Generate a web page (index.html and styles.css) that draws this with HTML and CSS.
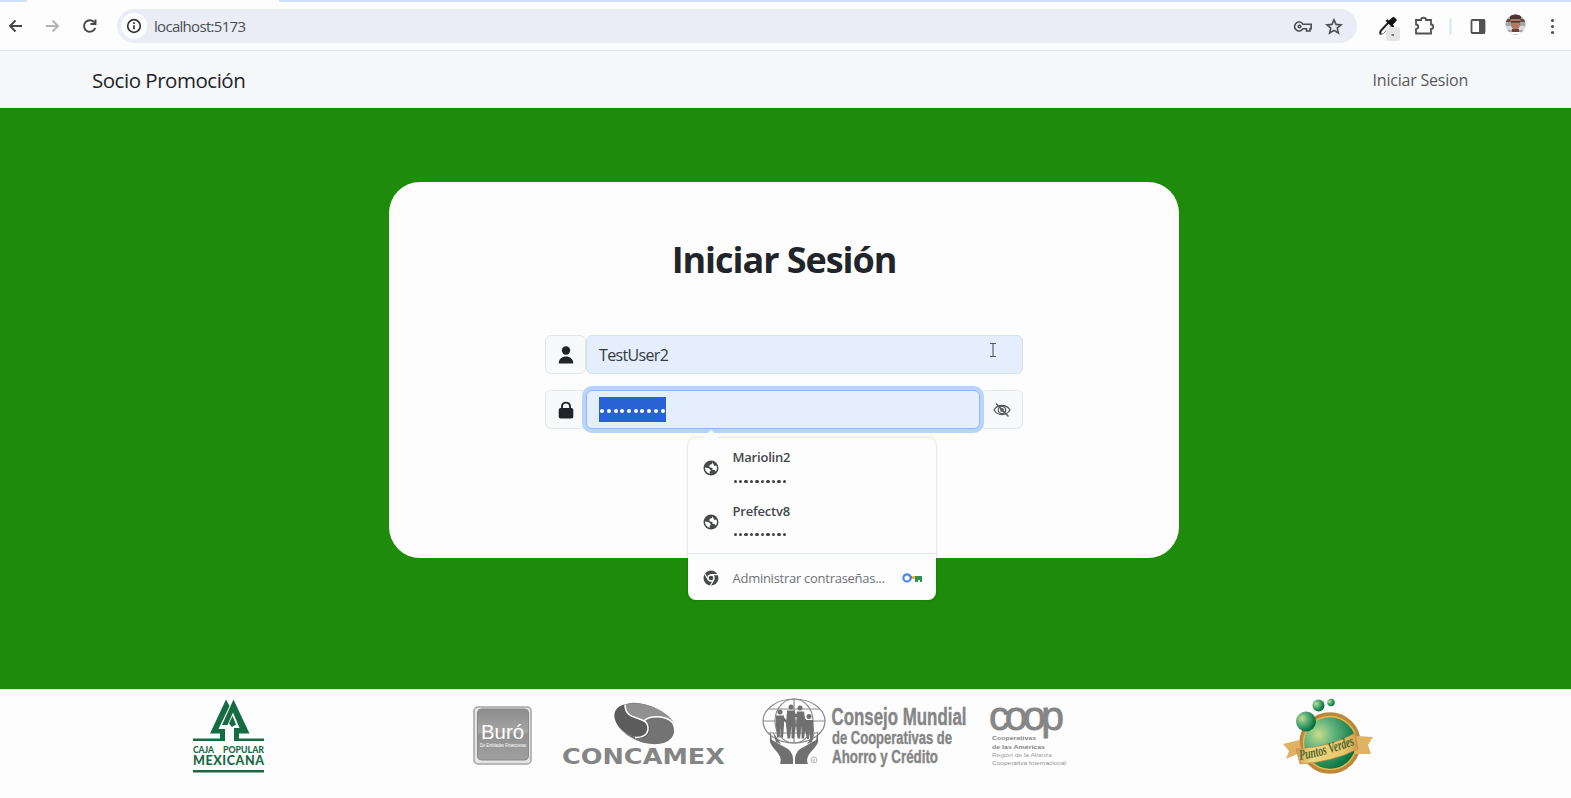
FILE: index.html
```
<!DOCTYPE html>
<html lang="es">
<head>
<meta charset="utf-8">
<title>Socio Promoción</title>
<link rel="stylesheet" href="styles.css">
</head>
<body>
<div class="tabstrip"><div class="tab"></div></div>
<header class="toolbar">
  <svg class="nav-icons" width="110" height="30" viewBox="0 0 110 30" fill="none" stroke="#45474a" stroke-width="1.9">
    <path d="M22 15H10.500M15.500 9.500 10 15l5.500 5.500"/>
    <path stroke="#b2b3b6" d="M46 15h11.500M52.500 9.500 58 15l-5.500 5.500"/>
    <path d="M94.500 11.500A5.800 5.800 0 1 0 95.300 17M95.500 8.500v4.500H90.500"/>
  </svg>
  <div class="omnibox">
    <span class="info"><svg width="16" height="16" viewBox="0 0 16 16" fill="none" stroke="#333538" stroke-width="1.7"><circle cx="8" cy="8" r="6.300"/><path d="M8 7.200v4M8 4.300v1.700"/></svg></span>
    <span class="url">localhost:5173</span>
    <svg class="box-icons" width="56" height="24" viewBox="0 0 56 24" fill="none" stroke="#4b4d50" stroke-width="1.600">
      <path d="M11 10.300A4.500 4.500 0 1 0 11 14.700h3.500V17H18v-2.300h1.200v-4.400z"/><circle cx="7.500" cy="12.500" r="1.300"/>
      <path d="m42 5.800 2 4.600 5 .5-3.800 3.200 1.200 4.900-4.400-2.600-4.400 2.600 1.200-4.900-3.800-3.200 5-.5z"/>
    </svg>
  </div>
  <svg class="ext-icons" width="205" height="34" viewBox="0 0 205 34">
    <path d="M15 25.500q-2-2 1-5l7.500-8" fill="none" stroke="#222" stroke-width="2"/><path d="m14 25.800 3.500-1.300 7-7.500" fill="none" stroke="#777" stroke-width="1"/><path d="m20.500 11 7 7" stroke="#111" stroke-width="2.400"/><path d="m25 10.500 2.500-2 2.500 2.500-2 2.500-2 2-3-3z" fill="#111" stroke="#111" stroke-width="1.500" stroke-linejoin="round"/>
    <rect x="20" y="18" width="14" height="14" rx="3" fill="#e5e5e6"/><path d="M25.500 26h2.500" stroke="#555" stroke-width="1.500"/>
    <path d="M50 11h5c0-3 5-3 5 0h5v4.500c3 0 3 4.500 0 4.500v4.500H50V20c3-.3 3-4.200 0-4.500z" fill="none" stroke="#505255" stroke-width="1.800"/>
    <path d="M84.500 9.500v16" stroke="#d4e5fb" stroke-width="2"/>
    <rect x="105.500" y="11" width="13" height="13" rx="1" fill="none" stroke="#505255" stroke-width="1.800"/><path d="M113 10.500h6v14h-6z" fill="#505255"/>
    <clipPath id="av"><circle cx="149.500" cy="15.500" r="10"/></clipPath>
    <g clip-path="url(#av)"><path fill="#a9a6a6" d="M138 4h22v22h-22z"/><path fill="#d8dce1" d="M138 17h22v4h-22z"/><path fill="#64514a" d="M138 10h22v3h-22z"/><ellipse cx="149.500" cy="13" rx="5" ry="8" fill="#ad7b64"/><path fill="#493633" d="M144 7c2-4 9-4 11 0v3h-11zM145 12h9v1.500h-9z"/><path fill="#733f31" d="M146 20h7v6h-7z"/><path fill="#fff" d="M138 23h22v4h-22z"/></g>
    <g fill="#505255"><circle cx="186.500" cy="11.500" r="1.600"/><circle cx="186.500" cy="17.500" r="1.600"/><circle cx="186.500" cy="23.500" r="1.600"/></g>
  </svg>
</header>
<nav class="navbar"><span class="brand">Socio Promoción</span><a class="login">Iniciar Sesion</a></nav>
<main class="stage">
  <section class="card">
    <h1>Iniciar Sesión</h1>
    <div class="group">
      <span class="addon"><svg width="16" height="18" viewBox="0 0 16 18" fill="#202428"><circle cx="8" cy="4.500" r="4.200"/><path d="M.8 17.400c-.5-9.200 14.900-9.200 14.400 0z"/></svg></span>
      <div class="field">TestUser2
        <svg class="caret" width="8" height="16" viewBox="0 0 8 16" fill="none" stroke="#55585c" stroke-width="1.100"><path d="M1 1.500h6M4 1.500v13M1 14.500h6"/></svg>
      </div>
    </div>
    <div class="group">
      <span class="addon"><svg width="16" height="18" viewBox="0 0 16 18"><rect x=".7" y="7" width="14.600" height="10.500" rx="2" fill="#202428"/><path d="M4 8V5.500c0-5.200 8-5.200 8 0V8" fill="none" stroke="#202428" stroke-width="1.900"/></svg></span>
      <div class="field focused"><span class="selected"><i></i><i></i><i></i><i></i><i></i><i></i><i></i><i></i><i></i><i></i></span></div>
      <span class="addon eye"><svg width="18" height="16" viewBox="0 0 18 16" fill="none" stroke="#55595d" stroke-width="1.300"><path d="M1 8c3.500-6 12.500-6 16 0-3.500 6-12.500 6-16 0z"/><circle cx="9" cy="8" r="3.700"/><circle cx="9" cy="8" r="1.300"/><path d="m3 1.500 12.500 13" stroke-width="1.500"/></svg></span>
    </div>
    <div class="popup">
      <div class="entry"><svg class="globe" width="16" height="16" viewBox="0 0 16 16"><circle cx="8" cy="8" r="7.500" fill="#47494c"/><path fill="#fff" d="M9.500 2.200 9 4 6.500 5v2.300L9.500 8v2h2l1.200 1.600a6 6 0 0 0 .6-6.200L11.500 6 10.500 4.500zM2 7.500l4 .8 2 2.400-1.500 1L7 13.800A6 6 0 0 1 2 7.500z"/></svg><div><b>Mariolin2</b><div class="dots"><i></i><i></i><i></i><i></i><i></i><i></i><i></i><i></i><i></i><i></i></div></div></div>
      <div class="entry"><svg class="globe" width="16" height="16" viewBox="0 0 16 16"><circle cx="8" cy="8" r="7.500" fill="#47494c"/><path fill="#fff" d="M9.500 2.200 9 4 6.500 5v2.300L9.500 8v2h2l1.200 1.600a6 6 0 0 0 .6-6.200L11.500 6 10.500 4.500zM2 7.500l4 .8 2 2.400-1.500 1L7 13.800A6 6 0 0 1 2 7.500z"/></svg><div><b>Prefectv8</b><div class="dots"><i></i><i></i><i></i><i></i><i></i><i></i><i></i><i></i><i></i><i></i></div></div></div>
      <div class="manage">
        <svg width="16" height="16" viewBox="0 0 16 16"><circle cx="8" cy="8" r="7.500" fill="#47494c"/><circle cx="8" cy="8" r="3" fill="#47494c" stroke="#fff" stroke-width="1.400"/><path d="M8 4.700h7M5.200 9.800 1.700 3.700M10.800 9.800 7.300 15.700" stroke="#fff" stroke-width="1.200"/></svg>
        <span>Administrar contraseñas...</span>
        <svg class="key" width="20" height="10" viewBox="0 0 20 10"><path d="M9 4.500h5" stroke="#f2b53c" stroke-width="3"/><path d="M13 3h7v6h-2V7h-2v2h-3z" fill="#2d9150"/><path d="M8 3h2v3H8z" fill="#e65e45"/><circle cx="5" cy="4.900" r="3.600" fill="none" stroke="#4b85ed" stroke-width="2.200"/></svg>
      </div>
    </div>
  </section>
</main>
<footer class="footer">
  <svg class="logo caja" width="76" height="80" viewBox="0 0 76 80" fill="#176b42">
    <path d="M35 2.500 38.500 9 27.500 32H34v12H2v-2.500h27V36.500H19zM42.500 2.500 58.500 36.500H48v5h25V44H43V31h5.500L42 15.500 36.500 28H31zM2 73h71v2.500H2z"/><path d="M41.500 19 45 27.500 41 30 38 26.500z"/>
    <text x="2" y="55.500" font-size="9.500" textLength="21" lengthAdjust="spacingAndGlyphs">CAJA</text><text x="32" y="55.500" font-size="9.500" textLength="41" lengthAdjust="spacingAndGlyphs">POPULAR</text>
    <text x="2" y="68" font-size="12.500" textLength="71" lengthAdjust="spacing">MEXICANA</text>
  </svg>
  <svg class="logo buro" width="60" height="60" viewBox="0 0 60 60">
    <defs><linearGradient id="bg" x2="0" y2="1"><stop stop-color="#8c8c8c"/><stop offset=".45" stop-color="#a5a5a5"/><stop offset=".5" stop-color="#919191"/><stop offset="1" stop-color="#a0a0a0"/></linearGradient></defs>
    <rect x="1" y="1" width="57" height="57" rx="4" fill="#e5e5e5" stroke="#a4a4a4" stroke-width="1.500"/><rect x="4.500" y="3" width="51" height="51" rx="4" fill="url(#bg)" stroke="#888"/>
    <text x="8" y="33" font-size="20" fill="#fff" textLength="43" lengthAdjust="spacingAndGlyphs">Buró</text><text x="7" y="41" font-size="4.500" fill="#fff" textLength="46" lengthAdjust="spacingAndGlyphs">De Entidades Financieras</text>
  </svg>
  <svg class="logo conca" width="166" height="66" viewBox="0 0 166 66">
    <ellipse cx="82.500" cy="21.500" rx="31" ry="18.500" transform="rotate(22 82.500 21.500)" fill="#737373"/><path d="M63 2.500C49 5 49 20 62 29c7 5 16 8 22 6 7-6 4-16-6-19-10-2-15-6-15-13.500z" fill="#5c5c5c"/><path d="M63 2.500c16-4 43 5 49 19-6-7-22-8-29-2.500l-5-3c-10-2-15-6-15-13.500z" fill="#919191"/><path d="M63 2.500c0 19 24 9 23 25q-1 8-13 8M82 19c5-6 22-6 29 2" fill="none" stroke="#fff" stroke-width="1.500"/>
    <text class="wide" x="0" y="62" font-size="21" textLength="163" lengthAdjust="spacingAndGlyphs">CONCAMEX</text>
  </svg>
  <svg class="logo consejo" width="208" height="72" viewBox="0 0 208 72">
    <g fill="none" stroke="#8b8b8b" stroke-width="1.200"><ellipse cx="33" cy="23" rx="31" ry="22"/><ellipse cx="33" cy="23" rx="19" ry="22"/><path d="M2 23h62M7 11h52M7 35h52M33 1v44"/></g>
    <g fill="#707070"><circle cx="19" cy="14" r="2.500"/><circle cx="30" cy="9" r="2.500"/><circle cx="39" cy="10" r="2.500"/><circle cx="48" cy="18.500" r="2.500"/><path d="M15 17.500h8v10l-1 12h-2.500V29l-1 10.500H16l-1-12zM26 12.500h8l1 15-2 13h-2.500V28L29 40.500h-2.500L25 27zM36 13.500h7l2 14-2 13h-2.500V28L39 40.500h-2.500L35 27zM45 22h7l1 10-2 9h-2v-9l-1 9h-2l-2-9zM22 18l4 5v3l-4-4zM33 16l4-1v4h-4zM42 17l4 6v3l-4-4z"/>
    <path d="M9 33 11 42l16 9q6 4 5 15H19c4-9-8-15-10-22zM12 34l3 10 5 2z"/><path d="M57 33 55 42 39 51q-6 4-5 15h13c-4-9 8-15 10-22zM54 34l-3 10-5 2z"/></g>
    <circle cx="53" cy="62" r="3" fill="none" stroke="#999" stroke-width=".7"/><text x="51.500" y="63.500" font-size="4" fill="#888">R</text>
    <g class="condensed"><text x="70.500" y="26.500" font-size="24" textLength="135" lengthAdjust="spacingAndGlyphs">Consejo Mundial</text><text x="71" y="46" font-size="18" textLength="120" lengthAdjust="spacingAndGlyphs">de Cooperativas de</text><text x="71" y="64.500" font-size="18" textLength="106" lengthAdjust="spacingAndGlyphs">Ahorro y Crédito</text></g>
  </svg>
  <svg class="logo coop" width="82" height="64" viewBox="0 0 82 64" fill="#858585">
    <text class="rings" x="0" y="24.500" font-size="41" textLength="75" lengthAdjust="spacing">coop</text>
    <g class="small"><text x="3" y="35" font-weight="700" textLength="44" lengthAdjust="spacingAndGlyphs">Cooperativas</text><text x="3" y="43.500" font-weight="700" textLength="53" lengthAdjust="spacingAndGlyphs">de las Américas</text><text x="3" y="51.500" fill="#a2a2a2" textLength="60" lengthAdjust="spacingAndGlyphs">Región de la Alianza</text><text x="3" y="59.500" fill="#949494" textLength="74" lengthAdjust="spacingAndGlyphs">Cooperativa Internacional</text></g>
  </svg>
  <svg class="logo puntos" width="92" height="78" viewBox="0 0 92 78">
    <defs><radialGradient id="gr" cx=".3" cy=".35" r=".7"><stop stop-color="#c8dd87"/><stop offset=".35" stop-color="#69b681"/><stop offset="1" stop-color="#006f3a"/></radialGradient><linearGradient id="gold"><stop stop-color="#d09a4c"/><stop offset=".25" stop-color="#f1d681"/><stop offset=".75" stop-color="#ecc76b"/><stop offset="1" stop-color="#cf9c50"/></linearGradient></defs>
    <circle cx="48" cy="45" r="28.500" fill="url(#gr)" stroke="#bd873a" stroke-width="4.500"/><circle cx="48" cy="45" r="26.500" fill="none" stroke="#e6b655" stroke-width="1.500"/>
    <circle cx="24" cy="23.500" r="10" fill="url(#gr)"/><circle cx="36.500" cy="7.500" r="6" fill="url(#gr)"/><circle cx="49" cy="4.500" r="3.700" fill="url(#gr)"/>
    <path d="m1 46 16-4 3 12-16 7 3-8zM75 38l16 1-5 8 3 9H72z" fill="#dfb363"/><path d="M14 51Q50 49 73 35l3 16Q50 64 18 66z" fill="url(#gold)" stroke="#bd863e" stroke-width=".6"/>
    <path id="curve" d="M18 62Q48 57 75 46" fill="none"/><text class="script" font-size="15"><textPath href="#curve" textLength="57" lengthAdjust="spacingAndGlyphs">Puntos Verdes</textPath></text>
  </svg>
</footer>
</body>
</html>
```
FILE: styles.css
```
* { box-sizing: border-box; }
body { margin: 0; width: 1571px; height: 798px; overflow: hidden; background: #fdfdfe; font-family: "Open Sans", "Noto Sans", sans-serif; color: #212529; }
svg { display: block; flex: none; overflow: visible; }
.tabstrip { height: 2px; background: #d1e1fa; padding-left: 27px; }
.tab { width: 252px; height: 2px; background: #fdfdfe; }
.toolbar { height: 49px; display: flex; align-items: center; border-bottom: 1px solid #e4e5e7; background: #fdfdfe; }
.nav-icons { margin-left: 0; }
.omnibox { margin-left: 7px; width: 1240px; height: 34px; border-radius: 17px; background: #eaedf6; display: flex; align-items: center; padding: 0 9px 0 4px; }
.info { width: 26px; height: 26px; border-radius: 50%; background: #fff; display: grid; place-items: center; }
.url { font-size: 15px; letter-spacing: -0.7px; color: #4c4e54; margin-left: 7px; }
.box-icons { margin-left: auto; }
.ext-icons { margin-left: 9px; }
.navbar { height: 57px; padding: 1px 103px 0 92px; background: #f6f7f9; display: flex; align-items: center; justify-content: space-between; }
.brand { font-size: 20.500px; letter-spacing: -0.48px; }
.login { font-size: 16px; letter-spacing: -0.22px; color: #56585b; }
.stage { height: 581px; background: #1e8c0a; padding-top: 74px; }
.card { position: relative; width: 790.500px; height: 376px; margin-left: 388.500px; border-radius: 31px; background: #fdfdfe; padding: 51px 156px 0 156.500px; }
h1 { margin: 0 0 49px; font-size: 36px; line-height: 53px; font-weight: 700; letter-spacing: -1.05px; text-align: center; }
.group { display: flex; height: 39px; margin-bottom: 16px; }
.addon { width: 41px; border: 1px solid #e2e7ea; border-radius: 6px; background: #f8f9fa; display: grid; place-items: center; }
.field { flex: 1; border: 1px solid #d5e1ec; border-radius: 6px; background: #e5eefd; padding: 0 13px 0 12px; display: flex; align-items: center; font-size: 16px; letter-spacing: -0.65px; color: #35393d; }
.caret { margin: -9px 12px 0 auto; }
.focused { border-color: #8dbaf4; box-shadow: 0 0 0 4px #b8d4fb; z-index: 1; }
.selected { display: flex; align-items: center; justify-content: space-around; width: 67px; height: 25px; background: #2962d2; }
.selected i { width: 4px; height: 4px; margin-top: 2px; border-radius: 50%; background: #fff; }
.eye { width: 43px; }
.popup { position: absolute; z-index: 2; left: 299px; top: 256px; width: 248.500px; height: 162px; border-radius: 8px; background: #fdfdfe; box-shadow: 0 0 3px #0003; padding-top: 6px; }
.popup::before { content: ""; position: absolute; left: 15px; top: -8px; border: solid transparent; border-width: 0 8px 8px; border-bottom-color: #fdfdfe; }
.entry { height: 53.500px; padding: 0 15px; display: flex; gap: 14px; }
.globe { margin-top: 16px; }
.entry b { display: block; font-size: 13px; line-height: 26px; font-weight: 600; letter-spacing: -0.2px; color: #45484b; }
.dots { display: flex; gap: 2.200px; margin: 9.500px 0 0 1px; }
.dots i { width: 3.300px; height: 3.300px; border-radius: 50%; background: #404246; }
.manage { height: 48px; border-top: 1px solid #e2eaf5; padding: 0 14px 0 15px; display: flex; align-items: center; gap: 14px; margin-top: 2px; font-size: 13px; letter-spacing: -0.27px; color: #707276; white-space: nowrap; }
.key { margin-left: auto; }
.footer { height: 109px; background: #fdfdfe; display: flex; align-items: flex-start; border-top: 1px solid #d8efd4; }
.caja { margin: 7px 0 0 191px; font-family: Lato, sans-serif; font-weight: 900; }
.buro { margin: 16px 0 0 206px; font-family: "Liberation Sans", sans-serif; }
.conca { margin: 12px 0 0 29px; }
.wide { font-family: "DejaVu Sans", sans-serif; font-weight: 700; fill: #858585; }
.consejo { margin: 8px 0 0 33px; }
.condensed { font-family: "Liberation Sans", sans-serif; font-weight: 700; fill: #858585; stroke: #858585; stroke-width: .4px; }
.coop { margin: 15px 0 0 20px; }
.rings { font-family: "Liberation Sans", sans-serif; font-weight: 400; stroke: #858585; stroke-width: .8px; }
.small { font-family: "Liberation Sans", sans-serif; font-size: 6px; }
.puntos { margin: 8px 0 0 211px; }
.script { font-family: "Liberation Serif", serif; font-style: italic; font-weight: 700; fill: #4b6a2d; }
```
